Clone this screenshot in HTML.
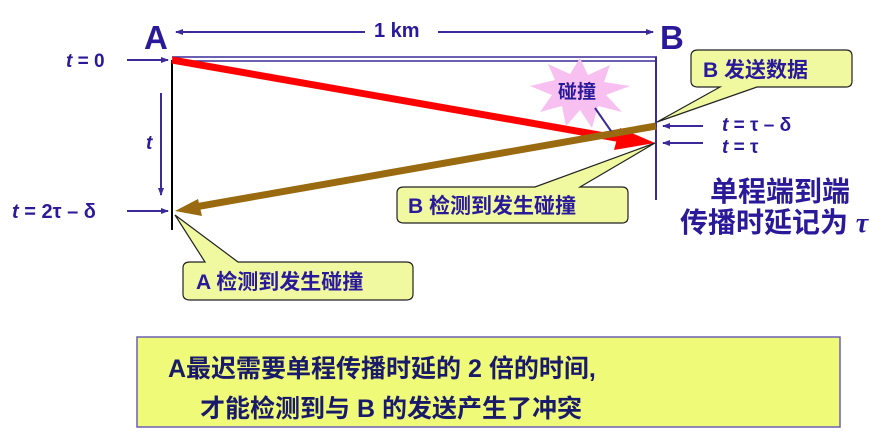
<!DOCTYPE html>
<html><head><meta charset="utf-8"><style>
html,body{margin:0;padding:0;background:#fff;width:896px;height:446px;overflow:hidden}
svg text{font-family:"Liberation Sans","Noto Sans CJK SC",sans-serif;font-weight:bold}
</style></head><body>
<svg width="896" height="446" viewBox="0 0 896 446" xmlns="http://www.w3.org/2000/svg">
<defs>
<marker id="ah" markerWidth="8" markerHeight="6" refX="7" refY="3" orient="auto" markerUnits="userSpaceOnUse"><path d="M0,0 L8,3 L0,6 Z" fill="#3a2a9a"/></marker>
</defs>
<g fill="#2a1a9a">
<text x="144" y="49" font-size="33">A</text>
<text x="660" y="49" font-size="33">B</text>
<text x="374" y="37" font-size="20">1 km</text>
<text x="66" y="67" font-size="19"><tspan font-style="italic">t</tspan> = 0</text>
<text x="146" y="149" font-size="19" font-style="italic">t</text>
<text x="12" y="218" font-size="20"><tspan font-style="italic">t</tspan> = 2τ – δ</text>
<text x="722" y="131" font-size="19"><tspan font-style="italic">t</tspan> = τ – δ</text>
<text x="722" y="153" font-size="19"><tspan font-style="italic">t</tspan> = τ</text>
<text x="710" y="201" font-size="28">单程端到端</text>
<text x="680" y="232" font-size="28">传播时延记为 <tspan font-style="italic" font-family="Liberation Serif">τ</tspan></text>
</g>
<g stroke="#3a2a9a" stroke-width="2" fill="none">
<line x1="365" y1="32" x2="176" y2="32" marker-end="url(#ah)"/>
<line x1="438" y1="32" x2="653" y2="32" marker-end="url(#ah)"/>
<line x1="127" y1="60" x2="168" y2="60" marker-end="url(#ah)"/>
<line x1="127" y1="211" x2="168" y2="211" marker-end="url(#ah)"/>
<line x1="161" y1="93" x2="161" y2="195" marker-end="url(#ah)"/>
<line x1="703" y1="126" x2="663" y2="126" marker-end="url(#ah)"/>
<line x1="703" y1="143" x2="663" y2="143" marker-end="url(#ah)"/>
<line x1="172" y1="57" x2="657" y2="57" stroke-width="1.5"/>
<line x1="172" y1="61" x2="657" y2="61" stroke-width="1.5"/>
<line x1="656" y1="57" x2="656" y2="200" stroke-width="2"/>
</g>
<line x1="172" y1="60" x2="172" y2="230" stroke="#000" stroke-width="2"/>
<polygon points="580,58 588,75 610,65 604,82 630,86 606,95 622,112 598,106 592,128 580,110 566,126 562,106 540,112 552,95 530,86 555,80 548,64 570,74" fill="#f7c0f0"/>
<text x="558" y="98" font-size="19" fill="#2a1a9a">碰撞</text>
<line x1="172" y1="60" x2="622" y2="139" stroke="#ff0000" stroke-width="7"/>
<polygon points="655,143 620,128 614,150" fill="#ff0000"/>
<line x1="656" y1="126" x2="195" y2="207" stroke="#9a6a10" stroke-width="7"/>
<polygon points="175,211 198,199 202,216" fill="#9a6a10"/>
<line x1="595" y1="108" x2="611" y2="131" stroke="#3a2a9a" stroke-width="2"/>
<g fill="#f0f8a0" stroke="#222" stroke-width="1.2">
<path d="M698,50 H846 Q852,50 852,56 V81 Q852,87 846,87 H757 L657,122 L720,87 H698 Q691,87 691,81 V56 Q691,50 698,50 Z"/>
<path d="M404,187 H535 L655,143 L580,187 H622 Q628,187 628,193 V217 Q628,223 622,223 H404 Q397,223 397,217 V193 Q397,187 404,187 Z"/>
<path d="M190,262 H205 L175,215 L238,262 H406 Q413,262 413,268 V294 Q413,300 406,300 H190 Q183,300 183,294 V268 Q183,262 190,262 Z"/>
</g>
<g fill="#2a1a9a" font-size="21">
<text x="703" y="77">B 发送数据</text>
<text x="408" y="213">B 检测到发生碰撞</text>
<text x="196" y="289">A 检测到发生碰撞</text>
</g>
<rect x="137" y="337" width="703" height="90" fill="#eefa78" stroke="#6a60b0" stroke-width="1.5"/>
<g fill="#1a1a6a" font-size="25">
<text x="168" y="377">A最迟需要单程传播时延的 2 倍的时间,</text>
<text x="200" y="417">才能检测到与 B 的发送产生了冲突</text>
</g>
</svg>
</body></html>
